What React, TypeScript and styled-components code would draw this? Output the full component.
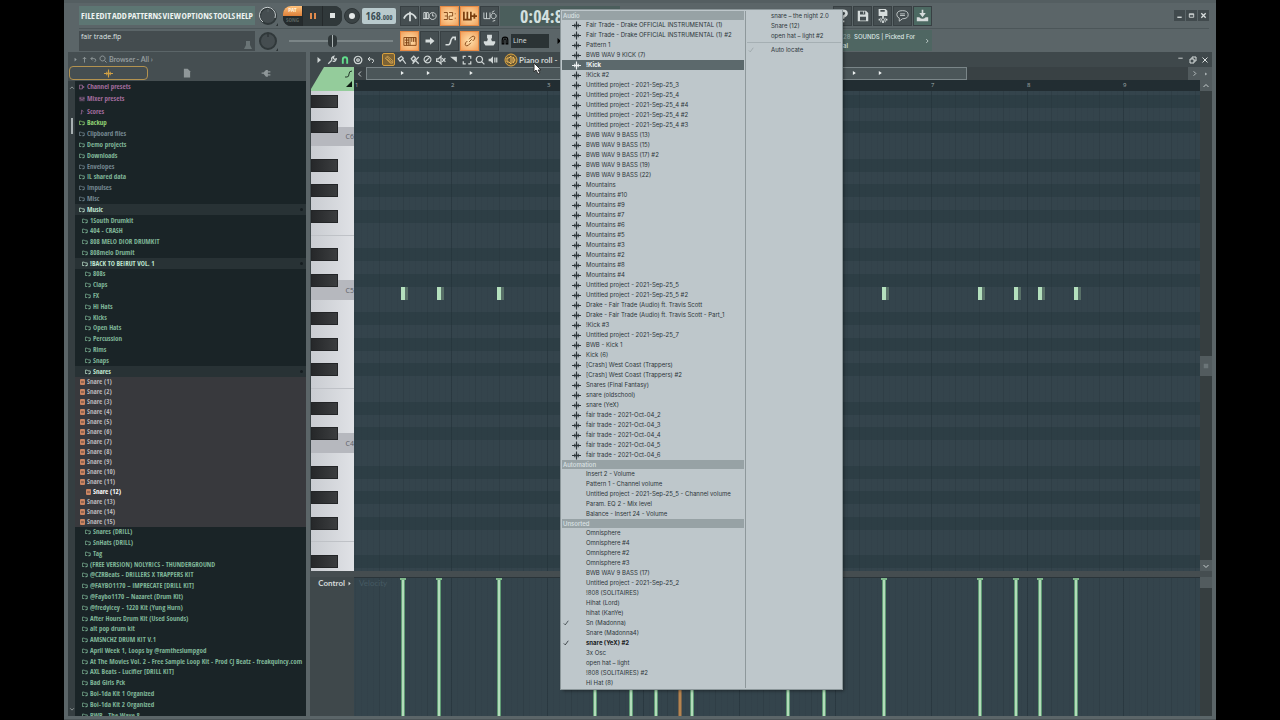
import React from "react";
import styled, { createGlobalStyle, css } from "styled-components";

const condensed = `"Open Sans Condensed", "Liberation Sans Narrow", "Liberation Sans", sans-serif`;
const sans = `"Open Sans", "Noto Sans", sans-serif`;
const labelFace = `Lato, "Open Sans", sans-serif`;
const menuFace = `Inter, "Open Sans", sans-serif`;

const Global = createGlobalStyle`
  * { box-sizing: border-box; }
  html, body { margin: 0; background: #000; }
  body { font-family: ${sans}; overflow: hidden; }
  button, input, select { font: inherit; color: inherit; margin: 0; padding: 0; border: 0; background: none; }
  ul { list-style: none; margin: 0; padding: 0; }
  h2 { margin: 0; font: inherit; }
`;

/* ---------- shell ---------- */

const Page = styled.div`
  padding: 0 5%;
  height: 100vh;
  background: #000;
`;

const Studio = styled.div`
  position: relative;
  height: 100%;
  display: flex;
  flex-direction: column;
  background: #5b6568;
  overflow: hidden;
`;

const Workspace = styled.div`
  flex: 1;
  min-height: 0;
  display: flex;
  gap: 4px;
  padding: 0 4px 3px;
  border-bottom: 1px solid #4a5356;
`;

/* ---------- top bar ---------- */

const TopBar = styled.header`
  display: flex;
  flex-direction: column;
  height: 52px;
  flex: none;
  border-top: 3px solid #545e61;
  padding: 0 7px 0 15px;
`;

const BarRow = styled.div<{ $rule?: boolean }>`
  display: flex;
  align-items: center;
  height: ${(p) => (p.$rule ? 26 : 23)}px;
  border-bottom: ${(p) => (p.$rule ? "1px solid #4c5659" : "0")};
`;

const MenuBar = styled.nav`
  display: flex;
  align-items: center;
  justify-content: space-between;
  width: 176px;
  height: 19px;
  padding: 0 2px;
  background: #5d7673;
  color: #eef3f1;
  font: 400 9px/12px ${condensed};
`;

const FileBox = styled.div`
  display: flex;
  justify-content: space-between;
  width: 176px;
  height: 20px;
  padding: 0 2px;
  background: #444c4f;
  color: #dfe4e4;
  font: 400 7px/12px ${sans};
  & > svg { align-self: flex-end; }
`;

const KnobSlot = styled.div`
  display: flex;
  justify-content: center;
  width: 26px;
  margin-right: 2px;
`;

const Transport = styled.div`
  display: flex;
  align-items: center;
  width: 59px;
  height: 20px;
  border-radius: 8px;
  background: #2b3234;
  overflow: hidden;
`;

const ModeSwitch = styled.div`
  width: 19px;
  height: 20px;
  display: flex;
  flex-direction: column;
`;

const Mode = styled.button<{ $on?: boolean }>`
  height: 10px;
  font: 700 6px/9px ${condensed};
  text-align: center;
  color: ${(p) => (p.$on ? "#fff3dc" : "#59625f")};
  background: ${(p) => (p.$on ? "linear-gradient(#ffc27c, #dd7f38)" : "#252b2d")};
`;

const TransportButton = styled.button`
  flex: 1;
  height: 20px;
  display: grid;
  place-items: center;
  background: #30383a;
  border-left: 1px solid #24292b;
`;

const Record = styled.button`
  display: grid;
  place-items: center;
  width: 16px;
  height: 16px;
  margin: 0 2px;
  border-radius: 50%;
  background: #3a4244;
  border: 1px solid #2d3436;
`;

const Tempo = styled.output`
  width: 34px;
  height: 16px;
  margin-right: 4px;
  border-radius: 2px;
  background: #b9cacd;
  color: #3c4e55;
  text-align: center;
  font: 400 11px/16px ${condensed};
  small { font-size: 7px; }
`;

const Tools = styled.div`
  display: flex;
  gap: 1px;
`;

const Tool = styled.button<{ $on?: boolean }>`
  display: grid;
  place-items: center;
  width: 19px;
  height: 20px;
  color: ${(p) => (p.$on ? "#7b3f10" : "#d6dcdc")};
  border: 1px solid ${(p) => (p.$on ? "#e78a44" : "#384043")};
  background: ${(p) => (p.$on ? "radial-gradient(#ffe3b0, #f2a05a)" : "#454e51")};
`;

const Clock = styled.output`
  width: 120px;
  height: 20px;
  margin-left: 1px;
  padding-left: 20px;
  background: #4b5e5c;
  color: #d3e0df;
  font: 400 18px/20px ${condensed};
`;

const FileTools = styled(Tools)`
  margin-left: 213px;
  & > :last-child { background: #4c6962; }
`;

const WindowButtons = styled.div`
  display: flex;
  gap: 1px;
  margin-left: auto;
`;

const WindowButton = styled.button`
  display: grid;
  place-items: center;
  width: 11px;
  height: 11px;
  background: #414a4d;
  color: #d9dede;
`;

const Position = styled.input`
  appearance: none;
  width: 104px;
  height: 13px;
  margin: 0 7px 0 6px;
  background: linear-gradient(#7b8587, #7b8587) center / 100% 2px no-repeat;
  &::-webkit-slider-thumb {
    appearance: none;
    width: 9px;
    height: 12px;
    border-radius: 4px;
    background: linear-gradient(90deg, #30383a 4px, #aab2b3 4px, #aab2b3 5px, #30383a 5px);
  }
`;

const SnapSelect = styled.select`
  appearance: none;
  width: 38px;
  height: 14px;
  margin: 0 6px 0 1px;
  padding-left: 2px;
  background: #2b3335;
  color: #d9dfdf;
  font: 400 7px/14px ${sans};
`;

const MagnetSlot = styled.span`
  display: flex;
  margin-left: 1px;
`;

const NewsPanel = styled.a`
  display: flex;
  align-items: center;
  justify-content: space-between;
  width: 92px;
  height: 21px;
  margin-left: 277px;
  padding: 0 2px 0 3px;
  background: #4f6662;
  color: #dbe5e3;
  font: 500 6px/9px ${menuFace};
  text-decoration: none;
  white-space: nowrap;
  span { color: #93a5a2; margin-right: 2px; }
`;

/* ---------- browser ---------- */

const Browser = styled.aside`
  width: 238px;
  flex: none;
  display: flex;
  flex-direction: column;
  background: #454e51;
`;

const BrowserTitle = styled.div`
  display: flex;
  align-items: center;
  gap: 2px;
  height: 14px;
  padding-left: 4px;
  color: #939b9d;
  font: 700 7px/14px ${labelFace};
`;

const BrowserTabs = styled.div`
  display: flex;
  height: 15px;
  padding: 0 1px 1px;
`;

const BrowserTab = styled.button<{ $on?: boolean }>`
  flex: 1;
  display: grid;
  place-items: center;
  border-radius: 4px;
  border: 1px solid ${(p) => (p.$on ? "#b3924f" : "transparent")};
  color: ${(p) => (p.$on ? "#d0a044" : "#8f9799")};
`;

const BrowserBody = styled.div`
  flex: 1;
  min-height: 0;
  display: flex;
`;

const BrowserScroll = styled.div`
  width: 7px;
  display: flex;
  flex-direction: column;
  align-items: center;
  justify-content: space-between;
  padding: 4px 0;
  background: #353e41;
  color: #a9b1b2;
`;

const BrowserThumb = styled.div`
  width: 2px;
  height: 16px;
  margin: 27px 0 auto;
  background: #a8b1b2;
`;

const Tree = styled.div`
  flex: 1;
  min-width: 0;
  overflow: hidden;
  background: #1a2427;
`;

const Branch = styled.ul<{ $height: number; $samples?: boolean }>`
  display: grid;
  grid-auto-rows: 1fr;
  height: ${(p) => p.$height}px;
  background: ${(p) => (p.$samples ? "#38393d" : "transparent")};
`;

type Tone = "preset" | "folder" | "dim" | "lime" | "open" | "sample" | "picked";

const tones: Record<Tone, string> = {
  preset: "#a46d9e",
  folder: "#7fb597",
  dim: "#748790",
  lime: "#8fd072",
  open: "#bfe4cf",
  sample: "#b9b6b9",
  picked: "#fafafa",
};

const Entry = styled.li<{ $tone: Tone; $depth: number }>`
  display: flex;
  align-items: center;
  gap: 2px;
  min-width: 0;
  padding-left: ${(p) => 4 + p.$depth * 3}px;
  color: ${(p) => tones[p.$tone]};
  background: ${(p) => (p.$tone === "open" ? "#283235" : "transparent")};
  font: 700 7px/10px ${condensed};
  white-space: nowrap;
  svg { flex: none; }
`;

const Expander = styled.i`
  width: 3px;
  height: 3px;
  margin: 0 3px 0 auto;
  border-radius: 50%;
  background: #151d20;
`;

/* ---------- piano roll ---------- */

const Roll = styled.main`
  flex: 1;
  min-width: 0;
  display: flex;
  flex-direction: column;
  background: #3f484b;
`;

const RollTitle = styled.div`
  display: flex;
  align-items: center;
  height: 15px;
  padding: 0 2px;
  color: #cfd5d5;
`;

const RollTool = styled.button<{ $on?: boolean; $tint?: string }>`
  display: grid;
  place-items: center;
  width: 13px;
  height: 13px;
  border-radius: 2px;
  color: ${(p) => p.$tint || "inherit"};
  border: ${(p) => (p.$on ? "1px solid #d79f3c" : "0")};
  background: ${(p) => (p.$on ? "#7c6335" : "none")};
`;

const ToolGap = styled.span`
  width: 5px;
`;

const RollName = styled.h2`
  margin-left: 1px;
  font: 700 8px/14px ${labelFace};
  white-space: nowrap;
`;

const RollGrid = styled.div`
  flex: 1;
  min-height: 0;
  display: grid;
  grid-template-columns: 44px minmax(0, 1fr) 12px;
  grid-template-rows: 13px 11px minmax(0, 480fr) 6px minmax(0, 139fr);
`;

const Corner = styled.div`
  grid-row: 1 / 3;
  padding-left: 1px;
  svg { display: block; width: 100%; height: 100%; }
`;

const ScrollRow = styled.div`
  grid-column: 2 / 4;
  display: flex;
  align-items: stretch;
  background: #394144;
  color: #c5cccd;
`;

const ScrollArrow = styled.button<{ $lit?: boolean }>`
  display: grid;
  place-items: center;
  width: 12px;
  background: ${(p) => (p.$lit ? "#515a5d" : "none")};
`;

const Overview = styled.div`
  flex: none;
  width: 70%;
  margin-right: auto;
  border: 1px solid #7a8588;
  background: #4b5659;
  svg { display: block; width: 100%; height: 100%; }
`;

const Ruler = styled.div`
  display: flex;
  overflow: hidden;
  background: #222d32;
  color: #a4aeb0;
  font: 400 6px/11px ${sans};
`;

const Bar = styled.span`
  flex: none;
  width: 96px;
  padding-left: 1px;
`;

const SideScroll = styled.div<{ $rows: string }>`
  grid-row: ${(p) => p.$rows};
  grid-column: 3;
  display: flex;
  flex-direction: column;
  justify-content: space-between;
  background: #363e40;
  color: #c5cccd;
`;

const SideBlock = styled.button<{ $tall?: boolean }>`
  display: grid;
  place-items: center;
  width: 12px;
  height: ${(p) => (p.$tall ? 20 : 11)}px;
  color: ${(p) => (p.$tall ? "#6b7578" : "inherit")};
  background: #525b5e;
`;

/* the thumb sits a little below the middle of its track */
const ThumbSpace = styled.span<{ $grow: number }>`
  flex: ${(p) => p.$grow};
`;

const laneRows = css`
  display: grid;
  grid-template-rows: 4px repeat(37, minmax(0, 1fr)) 3px;
`;

const keyWhite = "linear-gradient(90deg, #c9ccd1, #e0e2e6)";

const Keyboard = styled.div`
  ${laneRows}
  margin-left: 1px;
  background: ${keyWhite};
`;

const Key = styled.div<{ $black: boolean; $c: boolean; $cSharp: boolean; $line: boolean }>`
  display: flex;
  justify-content: ${(p) => (p.$black ? "flex-start" : "flex-end")};
  border-bottom: ${(p) => (p.$line ? "1px solid #bfc2c7" : "0")};
  background: ${(p) =>
    p.$c ? "#b6b8be" : p.$cSharp ? "linear-gradient(transparent 50%, #b6b8be 50%)" : "none"};
  color: #5e6167;
  font: 400 7px/8px ${sans};
`;

const BlackKey = styled.i`
  width: 27px;
  height: 100%;
  background: linear-gradient(90deg, #26282a, #3b3d3f);
  border: 1px solid #232527;
`;

const gridLines = css`
  position: relative;
  background-image:
    repeating-linear-gradient(90deg, transparent 0 95px, #22303866 95px 96px),
    repeating-linear-gradient(90deg, transparent 0 23px, #26343c44 23px 24px),
    repeating-linear-gradient(90deg, transparent 0 5px, #2a394133 5px 6px);
  background-position: 2px 0;
`;

const Lanes = styled.div`
  ${laneRows}
  ${gridLines}
  background-color: #34444c;
  overflow: hidden;
`;

const Lane = styled.div<{ $black: boolean }>`
  position: relative;
  background: ${(p) => (p.$black ? "#22323a55" : "transparent")};
`;

const Note = styled.i`
  position: absolute;
  top: 0;
  width: 7px;
  height: 100%;
  margin-left: -1px;
  background: linear-gradient(90deg, #b4e0bd 4px, #587068 4px);
`;

const Splitter = styled.div`
  grid-column: 1 / 4;
  background: #454d50;
`;

const ControlLabel = styled.div`
  display: flex;
  justify-content: flex-end;
  align-items: center;
  gap: 2px;
  height: 12px;
  padding-right: 2px;
  color: #d3d9d9;
  font: 700 8px/12px ${labelFace};
`;

const Velocities = styled.div`
  ${gridLines}
  background-color: #34444c;
  border-top: 1px solid #2a3439;
  overflow: hidden;
  color: #465a63;
  font: 400 8px/10px ${labelFace};
  padding-left: 5px;
`;

const Stem = styled.i<{ $ghost?: boolean }>`
  position: absolute;
  top: 0;
  bottom: 0;
  width: 2px;
  background: ${(p) => (p.$ghost ? "#b58450" : "#b2dcb9")};
  box-shadow: 0 0 0 1px ${(p) => (p.$ghost ? "#7b6248" : "#5f9a74")};
  &::before {
    content: "";
    position: absolute;
    top: 0;
    left: -2px;
    width: 6px;
    height: 2px;
    background: ${(p) => (p.$ghost ? "#a87c4e" : "#7fb98c")};
  }
`;

/* ---------- channel menu ---------- */

const ChannelMenu = styled.div`
  position: absolute;
  top: 10px;
  left: 497px;
  display: flex;
  padding: 1px 0;
  background: #bec7cb;
  box-shadow: 0 0 0 1px #8b9699, 2px 2px 3px #0006;
`;

const MenuColumn = styled.div<{ $side?: boolean }>`
  width: ${(p) => (p.$side ? 97 : 184)}px;
  padding: 0 1px;
  border-left: ${(p) => (p.$side ? "1px solid #8e989b" : "0")};
`;

const MenuHeading = styled.h2`
  height: 9px;
  padding-left: 1px;
  background: #97a2a5;
  color: #dce3e5;
  font: 500 6px/9px ${menuFace};
`;

const MenuItem = styled.button<{ $hot?: boolean; $strong?: boolean }>`
  display: flex;
  align-items: center;
  width: 100%;
  height: 10px;
  color: ${(p) => (p.$hot ? "#f1f4f4" : p.$strong ? "#1b2225" : "#2c3539")};
  background: ${(p) => (p.$hot ? "#5c696c" : "none")};
  font: ${(p) => (p.$hot || p.$strong ? 700 : 400)} 6px/10px ${menuFace};
  text-align: left;
  white-space: nowrap;
`;

const MenuMark = styled.span<{ $kind: "check" | "wave"; $faint?: boolean }>`
  flex: none;
  display: flex;
  width: ${(p) => (p.$kind === "check" ? 9 : 15)}px;
  padding-left: 1px;
  opacity: ${(p) => (p.$faint ? 0.25 : 1)};
`;

const MenuRule = styled.hr`
  height: 1px;
  margin: 1px 0 2px;
  border: 0;
  background: #a5afb3;
`;

const Pointer = styled.svg`
  position: absolute;
  left: 469px;
  top: 62px;
`;

/* ---------- drawings ---------- */

type IconProps = { size?: number; w?: number; box?: string; fill?: boolean; sw?: number; d: string };

function Icon({ size = 12, w, box = "0 0 16 16", fill, sw = 2, d }: IconProps) {
  return (
    <svg
      width={w ?? size}
      height={size}
      viewBox={box}
      fill={fill ? "currentColor" : "none"}
      stroke={fill ? "none" : "currentColor"}
      strokeWidth={sw}
      aria-hidden="true"
    >
      <path d={d} />
    </svg>
  );
}

const art = {
  metronome: "M8 14V3M8 5Q3 6 1 11M8 5q5 1 7 6",
  keysClock: "M1 4h2v7H1zM4 4h2v7H4zM0 11h7M11 4a4 4 0 1 0 .1 0M11 5v3h2",
  keysPlus: "M1 3v9h8V3M5 3v9M10 8h6M13 5v6",
  keysLoop: "M1 4v7h7V4M4 4v7M12 5a3 3 0 1 0 .1 0M10 4l3-2M14 13l-3 1",
  typing: "M1 4h14v9H1zM8 4v9M10 4v5M12 4v5M14 4v5M2 7h5M2 10h5M4 4v9M6 4v9",
  arrow: "M2 6h6V3l6 5-6 5v-3H2z",
  slide: "M2 13h4q2 0 3-5t5-5M11 3h4v4",
  link: "M7 9l3-3M5 8l-2 2q-1 2 0 3t3 0l3-3M11 8l2-2q1-2 0-3t-3 0L7 6",
  stamp: "M5 1h6v4l-1 1 1 3h4v2l-2 3H3l-2-3V9h4l1-3-1-1z",
  magnet: "M3 14V7q0-5 5-5t5 5v7h-3V7q0-2-2-2T6 7v7z",
  help: "M4 5q0-3 4-3t4 3q0 2-4 4v2M8 13v2",
  save: "M1 1h11l3 3v11H1zM4 2v4h7V2H9v3H8V2zM4 9v5h8V9z",
  saveNew: "M3 0h8l2 2v6H3zM5 1v2h5V1zM7 8h2v8H7zM3 11h10v2H3zM5 10h1v5H5zM10 10h1v5h-1z",
  speech: "M8 2q7 0 7 5t-7 5l-4 3 0-4q-3-1-3-4Q1 2 8 2zM5 6h6M5 8h6",
  download: "M7 1h2v4h3l-4 5-4-5h3zM1 10h3q4 4 8 0h3v5H1z",
  min: "M3 12h10",
  max: "M3 4h10v8H3zM3 6h10",
  close: "M3 3l10 10M13 3L3 13",
  restore: "M2 6h8v8H2zM6 6V2h8v8h-4",
  tri: "M5 2l7 6-7 6z",
  up: "M8 15V3M4 7l4-4 4 4",
  undo: "M6 2L2 6l4 4M2 6h7q5 0 4 5l-3 3",
  search: "M7 2a5 5 0 1 0 .1 0M11 11l4 4",
  wave: "M0 8h16M5 5v6M8 1v14M11 5v6",
  page: "M3 1h6l4 4v10H3z",
  plug: "M1 7h3l4-4h3v2h4v2h-4v3h4v2h-4v2H8L4 9H1z",
  wrench: "M2 14l6-6M8 8q-2-4 3-6l-1 3 2 2 3-1q-1 5-6 4",
  target: "M8 2a6 6 0 1 0 .1 0M8 6a2 2 0 1 0 .1 0",
  pencil: "M2 5l4-3 8 7v4h-4zM5 3l8 9M4 6l7 6",
  brush: "M2 6l5-4 3 3-5 5zM9 7l5 7",
  scrub: "M2 6l4-4 3 3-4 5zM8 8l6 6M14 3L4 14",
  ban: "M8 2a6 6 0 1 0 .1 0M12 4l-8 8",
  mute: "M1 6h3l4-4v12l-4-4H1zM10 5l5 6M15 5l-5 6",
  slice: "M2 3h12v10z",
  select: "M2 6V2h4M10 2h4v4M14 10v4h-4M6 14H2v-4",
  speaker: "M1 6h3l4-4v12l-4-4H1zM10 4h2v8h-2zM13 4h2v8h-2z",
  chevL: "M10 3L5 8l5 5",
  chevR: "M6 3l5 5-5 5",
  chevU: "M3 10l5-5 5 5",
  chevD: "M3 6l5 5 5-5",
  check: "M2 9l4 4L14 2",
  folder: "M1 3h5l2 2h6v7H9M1 3v9h5M10 14l4-3",
  preset: "M1 3h8v10H1zM9 5l5 3-5 3",
  mixer: "M3 2v12M8 2v12M13 2v12M1 6h4M6 10h4M11 6h4",
  score: "M4 13h3V3l5 4",
};

function Knob({ bright }: { bright?: boolean }) {
  return (
    <svg width="20" height="20" viewBox="0 0 20 20" aria-hidden="true">
      <circle cx="10" cy="10" r="8" fill="#454d50" stroke="#30383a" strokeWidth="2" />
      {bright && <path d="M5 16A8 8 0 1 1 17 12" fill="none" stroke="#c9d0d1" strokeWidth="1" />}
      <path d="M10 3v3" stroke={bright ? "#586264" : "#242b2d"} strokeWidth="1" />
      <path d="M18 20l2-3v3z" fill="#2d3436" />
    </svg>
  );
}

function SampleIcon() {
  return (
    <svg width="6" height="6" viewBox="0 0 6 6" aria-hidden="true">
      <rect x="1" width="5" height="6" rx="1" fill="#cc8562" />
      <path d="M2 3h3" stroke="#5f4a42" strokeWidth="1" />
    </svg>
  );
}

/* ---------- data ---------- */

type Row = [string, Tone, number];

const presets = ["Channel presets", "Mixer presets", "Scores"];
const presetArt = [art.preset, art.mixer, art.score];

const folders: Row[] = [
  ["Backup", "lime", 0],
  ["Clipboard files", "dim", 0],
  ["Demo projects", "folder", 0],
  ["Downloads", "folder", 0],
  ["Envelopes", "dim", 0],
  ["IL shared data", "folder", 0],
  ["Impulses", "dim", 0],
  ["Misc", "dim", 0],
  ["Music", "open", 0],
  ["1South Drumkit", "folder", 1],
  ["404 - CRASH", "folder", 1],
  ["808 MELO DIOR DRUMKIT", "folder", 1],
  ["808melo Drumit", "folder", 1],
  ["!BACK TO BEIRUT VOL. 1", "open", 1],
  ["808s", "folder", 2],
  ["Claps", "folder", 2],
  ["FX", "folder", 2],
  ["Hi Hats", "folder", 2],
  ["Kicks", "folder", 2],
  ["Open Hats", "folder", 2],
  ["Percussion", "folder", 2],
  ["Rims", "folder", 2],
  ["Snaps", "folder", 2],
  ["Snares", "open", 2],
];

const kits: Row[] = [
  ["Snares (DRILL)", "folder", 2],
  ["SnHats (DRILL)", "folder", 2],
  ["Tag", "folder", 2],
  ["(FREE VERSION) NOLYRICS - THUNDERGROUND", "folder", 1],
  ["@CZRBeats - DRILLERS X TRAPPERS KIT", "folder", 1],
  ["@FAYBO1170 – IMPRECATE [DRILL KIT]", "folder", 1],
  ["@Faybo1170 – Nazaret (Drum Kit)", "folder", 1],
  ["@fredyicey - 1220 Kit (Yung Hurn)", "folder", 1],
  ["After Hours Drum Kit (Used Sounds)", "folder", 1],
  ["alt pop drum kit", "folder", 1],
  ["AMSNCHZ DRUM KIT V.1", "folder", 1],
  ["April Week 1, Loops by @ramtheslumpgod", "folder", 1],
  ["At The Movies Vol. 2 - Free Sample Loop Kit - Prod CJ Beatz - freakquincy.com", "folder", 1],
  ["AXL Beats - Lucifier [DRILL KIT]", "folder", 1],
  ["Bad Girls Pck", "folder", 1],
  ["Boi-1da Kit 1 Organized", "folder", 1],
  ["Boi-1da Kit 2 Organized", "folder", 1],
  ["BWB - The Wave 8", "folder", 1],
];

const audio = [
  "Fair Trade - Drake OFFICIAL INSTRUMENTAL (1)",
  "Fair Trade - Drake OFFICIAL INSTRUMENTAL (1) #2",
  "Pattern 1",
  "BWB WAV 9 KICK (7)",
  "!Kick",
  "!Kick #2",
  "Untitled project - 2021-Sep-25_3",
  "Untitled project - 2021-Sep-25_4",
  "Untitled project - 2021-Sep-25_4 #4",
  "Untitled project - 2021-Sep-25_4 #2",
  "Untitled project - 2021-Sep-25_4 #3",
  "BWB WAV 9 BASS (13)",
  "BWB WAV 9 BASS (15)",
  "BWB WAV 9 BASS (17) #2",
  "BWB WAV 9 BASS (19)",
  "BWB WAV 9 BASS (22)",
  "Mountains",
  "Mountains #10",
  "Mountains #9",
  "Mountains #7",
  "Mountains #6",
  "Mountains #5",
  "Mountains #3",
  "Mountains #2",
  "Mountains #8",
  "Mountains #4",
  "Untitled project - 2021-Sep-25_5",
  "Untitled project - 2021-Sep-25_5 #2",
  "Drake - Fair Trade (Audio) ft. Travis Scott",
  "Drake - Fair Trade (Audio) ft. Travis Scott - Part_1",
  "!Kick #3",
  "Untitled project - 2021-Sep-25_7",
  "BWB - Kick 1",
  "Kick (6)",
  "[Crash] West Coast (Trappers)",
  "[Crash] West Coast (Trappers) #2",
  "Snares (Final Fantasy)",
  "snare (oldschool)",
  "snare (YeX)",
  "fair trade - 2021-Oct-04_2",
  "fair trade - 2021-Oct-04_3",
  "fair trade - 2021-Oct-04_4",
  "fair trade - 2021-Oct-04_5",
  "fair trade - 2021-Oct-04_6",
];

const automation = [
  "Insert 2 - Volume",
  "Pattern 1 - Channel volume",
  "Untitled project - 2021-Sep-25_5 - Channel volume",
  "Param. EQ 2 - Mix level",
  "Balance - Insert 24 - Volume",
];

const unsorted = [
  "Omnisphere",
  "Omnisphere #4",
  "Omnisphere #2",
  "Omnisphere #3",
  "BWB WAV 9 BASS (17)",
  "Untitled project - 2021-Sep-25_2",
  "!808 (SOLITAIRES)",
  "Hihat (Lord)",
  "hihat (KanYe)",
  "Sn (Madonna)",
  "Snare (Madonna4)",
  "snare (YeX) #2",
  "3x Osc",
  "open hat – light",
  "!808 (SOLITAIRES) #2",
  "Hi Hat (8)",
];

const recent = ["snare – the night 2.0", "Snare (12)", "open hat – light #2"];
const checked = ["Sn (Madonna)", "snare (YeX) #2", "Auto locate"];

const barLabels = ["1", "2", "3", "", "", "", "7", "8", "9"];

const hits = [8, 14, 24, 40, 46, 50, 54, 56, 72, 78, 88, 104, 110, 114, 120];
const ghostHit = 54;
const stepLeft = (step: number) => Math.round((step * 601) / 100);

/* semitone of every lane, from D#6 down to D#3 */
const lanes = Array.from({ length: 37 }, (_, i) => 87 - i);
const isBlack = (n: number) => [1, 3, 6, 8, 10].includes(n % 12);

/* ---------- parts ---------- */

function TopControls() {
  return (
    <TopBar>
      <BarRow $rule>
        <MenuBar>
          {["FILE", "EDIT", "ADD", "PATTERNS", "VIEW", "OPTIONS", "TOOLS", "HELP"].map((m) => (
            <button key={m}>{m}</button>
          ))}
        </MenuBar>
        <KnobSlot><Knob bright /></KnobSlot>
        <Transport>
          <ModeSwitch>
            <Mode $on>PAT</Mode>
            <Mode>SONG</Mode>
          </ModeSwitch>
          <TransportButton aria-label="Pause">
            <svg width="6" height="6"><path d="M0 0h2v6H0zM4 0h2v6H4z" fill="#e08a4c" /></svg>
          </TransportButton>
          <TransportButton aria-label="Stop">
            <svg width="5" height="5"><path d="M0 0h5v5H0z" fill="#dfe3e3" /></svg>
          </TransportButton>
        </Transport>
        <Record aria-label="Record">
          <svg width="6" height="6"><circle cx="3" cy="3" r="3" fill="#e6eaea" /></svg>
        </Record>
        <Tempo>168<small>.000</small></Tempo>
        <Tools>
          <Tool aria-label="Metronome"><Icon size={14} d={art.metronome} /></Tool>
          <Tool aria-label="Wait for input"><Icon size={14} sw={1} d={art.keysClock} /></Tool>
          <Tool $on aria-label="Countdown">
            <Icon size={14} sw={1} d="M1 4h4v4H2M5 8v4H1M7 4h4v4H7v4h4M14 5v1M14 10v1" />
          </Tool>
          <Tool $on aria-label="Overdub"><Icon size={14} d={art.keysPlus} /></Tool>
          <Tool aria-label="Loop recording"><Icon size={14} sw={1} d={art.keysLoop} /></Tool>
        </Tools>
        <Clock>0:04:8</Clock>
        <FileTools>
          <Tool aria-label="Help"><Icon size={14} sw={3} d={art.help} /></Tool>
          <Tool aria-label="Save">
            <svg width="12" height="12" viewBox="0 0 16 16" fill="currentColor" fillRule="evenodd" aria-hidden="true">
              <path d={art.save} />
            </svg>
          </Tool>
          <Tool aria-label="Save new version">
            <svg width="14" height="14" viewBox="0 0 16 16" fill="currentColor" fillRule="evenodd" aria-hidden="true">
              <path d={art.saveNew} />
            </svg>
          </Tool>
          <Tool aria-label="Comments"><Icon size={13} sw={1} d={art.speech} /></Tool>
          <Tool aria-label="Download"><Icon size={13} fill d={art.download} /></Tool>
        </FileTools>
        <WindowButtons>
          <WindowButton aria-label="Minimise"><Icon size={7} sw={3} d={art.min} /></WindowButton>
          <WindowButton aria-label="Maximise"><Icon size={7} d={art.max} /></WindowButton>
          <WindowButton aria-label="Close"><Icon size={7} sw={3} d={art.close} /></WindowButton>
        </WindowButtons>
      </BarRow>
      <BarRow>
        <FileBox>
          fair trade.flp
          <svg width="10" height="12" viewBox="0 0 10 12" aria-hidden="true">
            <path d="M3 2h4v4l2 4H1l2-4z" fill="#6a7476" />
          </svg>
        </FileBox>
        <KnobSlot><Knob /></KnobSlot>
        <Position type="range" min="0" max="100" defaultValue="41" aria-label="Song position" />
        <Tools>
          <Tool $on aria-label="Typing keyboard"><Icon size={14} sw={1} d={art.typing} /></Tool>
          <Tool aria-label="Step edit"><Icon size={12} fill d={art.arrow} /></Tool>
          <Tool aria-label="Slide"><Icon size={12} d={art.slide} /></Tool>
          <Tool $on aria-label="Link"><Icon size={14} sw={1} d={art.link} /></Tool>
          <Tool aria-label="Stamp"><Icon size={13} fill d={art.stamp} /></Tool>
        </Tools>
        <MagnetSlot><Icon size={9} w={10} sw={2} d={art.magnet} /></MagnetSlot>
        <SnapSelect aria-label="Snap"><option>Line</option></SnapSelect>
        <Icon size={8} fill d={art.tri} />
        <NewsPanel href="#news">
          <div><span>28</span> SOUNDS | Picked For<br />al</div>
          <Icon size={6} d={art.chevR} />
        </NewsPanel>
      </BarRow>
    </TopBar>
  );
}

function Folders({ rows }: { rows: Row[] }) {
  return (
    <>
      {rows.map(([name, tone, depth]) => (
        <Entry key={name} $tone={tone} $depth={depth}>
          <Icon size={6} d={art.folder} />
          {name}
          {tone === "open" && <Expander />}
        </Entry>
      ))}
    </>
  );
}

function BrowserPanel() {
  return (
    <Browser>
      <BrowserTitle>
        <Icon size={5} w={7} fill d={art.tri} />
        <Icon size={7} w={7} d={art.up} />
        <Icon size={7} d={art.undo} />
        <Icon size={8} d={art.search} />
        Browser - All ›
      </BrowserTitle>
      <BrowserTabs>
        <BrowserTab $on aria-label="Sounds"><Icon size={9} sw={2} d={art.wave} /></BrowserTab>
        <BrowserTab aria-label="Files"><Icon size={10} fill d={art.page} /></BrowserTab>
        <BrowserTab aria-label="Plugins"><Icon size={10} fill d={art.plug} /></BrowserTab>
      </BrowserTabs>
      <BrowserBody>
        <BrowserScroll>
          <Icon size={6} d={art.chevU} />
          <BrowserThumb />
          <Icon size={6} d={art.chevD} />
        </BrowserScroll>
        <Tree>
          <Branch $height={37}>
            {presets.map((name, i) => (
              <Entry key={name} $tone="preset" $depth={0}>
                <Icon size={6} d={presetArt[i]} />
                {name}
              </Entry>
            ))}
          </Branch>
          <Branch $height={259}><Folders rows={folders} /></Branch>
          <Branch $height={150} $samples>
            {Array.from({ length: 15 }, (_, i) => i + 1).map((n) => (
              <Entry key={n} $tone={n === 12 ? "picked" : "sample"} $depth={n === 12 ? 2 : 0}>
                <SampleIcon />
                Snare ({n})
              </Entry>
            ))}
          </Branch>
          <Branch $height={194}><Folders rows={kits} /></Branch>
        </Tree>
      </BrowserBody>
    </Browser>
  );
}

const PlainButtons = styled(WindowButtons)`
  button { background: none; }
`;

function PianoRoll() {
  return (
    <Roll>
      <RollTitle>
        <RollTool aria-label="Menu"><Icon size={8} fill d={art.tri} /></RollTool>
        <RollTool aria-label="Tools"><Icon size={10} d={art.wrench} /></RollTool>
        <RollTool $tint="#62dd8c" aria-label="Snap"><Icon size={10} fill d={art.magnet} /></RollTool>
        <RollTool aria-label="Target"><Icon size={10} sw={2} d={art.target} /></RollTool>
        <RollTool aria-label="Undo"><Icon size={8} d={art.undo} /></RollTool>
        <ToolGap />
        <RollTool $on $tint="#f0b95a" aria-label="Draw"><Icon size={10} sw={1} d={art.pencil} /></RollTool>
        <RollTool aria-label="Paint"><Icon size={10} d={art.brush} /></RollTool>
        <RollTool aria-label="Paint drums"><Icon size={10} d={art.scrub} /></RollTool>
        <RollTool aria-label="Delete"><Icon size={9} d={art.ban} /></RollTool>
        <RollTool aria-label="Mute"><Icon size={10} d={art.mute} /></RollTool>
        <RollTool aria-label="Slice"><Icon size={9} fill d={art.slice} /></RollTool>
        <RollTool aria-label="Select"><Icon size={10} d={art.select} /></RollTool>
        <RollTool aria-label="Zoom"><Icon size={10} d={art.search} /></RollTool>
        <RollTool aria-label="Play"><Icon size={10} fill d={art.speaker} /></RollTool>
        <ToolGap />
        <svg width="14" height="14" viewBox="0 0 14 14" aria-hidden="true">
          <circle cx="7" cy="7" r="6" fill="#6b5a34" stroke="#e3a83f" />
          <path d="M3 5h2l2-2v8L5 9H3zM9 4l2 3-2 3z" fill="none" stroke="#f0b95a" />
        </svg>
        <RollName>Piano roll -</RollName>
        <PlainButtons>
          <WindowButton aria-label="Minimise"><Icon size={7} d="M3 5h10" /></WindowButton>
          <WindowButton aria-label="Restore"><Icon size={8} d={art.restore} /></WindowButton>
          <WindowButton aria-label="Close"><Icon size={8} d={art.close} /></WindowButton>
        </PlainButtons>
      </RollTitle>
      <RollGrid>
        <Corner>
          <svg viewBox="0 0 43 24" preserveAspectRatio="none" aria-hidden="true">
            <path d="M13 0h30v24H0v-2z" fill="#94cc9b" />
            <path d="M34 10h2q2 0 2-3t3-3" stroke="#24382b" strokeWidth="1" fill="none" />
            <path d="M41 14v6h-6z" fill="#0e1a12" />
          </svg>
        </Corner>
        <ScrollRow>
          <ScrollArrow aria-label="Scroll left"><Icon size={8} d={art.chevL} /></ScrollArrow>
          <Overview>
            <svg viewBox="0 0 600 11" preserveAspectRatio="xMinYMid meet" aria-hidden="true">
              {[34, 60, 103, 487, 513].map((x) => (
                <path key={x} d={`M${x} 3l3 2-3 2z`} fill="#eef1f1" />
              ))}
            </svg>
          </Overview>
          <ScrollArrow $lit aria-label="Scroll right"><Icon size={7} d={art.chevR} /></ScrollArrow>
          <ScrollArrow $lit aria-label="Zoom"><Icon size={4} fill d={art.tri} /></ScrollArrow>
        </ScrollRow>
        <Ruler>
          {barLabels.map((label, i) => <Bar key={i}>{label}</Bar>)}
        </Ruler>
        <SideScroll $rows="2 / 4">
          <SideBlock aria-label="Scroll up"><Icon size={8} d={art.chevU} /></SideBlock>
          <ThumbSpace $grow={59} />
          <SideBlock $tall aria-label="Vertical position"><Icon size={6} fill d="M2 2h12v12H2z" /></SideBlock>
          <ThumbSpace $grow={41} />
          <SideBlock aria-label="Scroll down"><Icon size={8} d={art.chevD} /></SideBlock>
        </SideScroll>
        <Keyboard>
          <span />
          {lanes.map((n) => (
            <Key key={n} $black={isBlack(n)} $c={n % 12 === 0} $cSharp={n % 12 === 1} $line={n % 12 === 5}>
              {isBlack(n) && <BlackKey />}
              {n % 12 === 0 && `C${n / 12 - 1}`}
            </Key>
          ))}
        </Keyboard>
        <Lanes>
          <span />
          {lanes.map((n) => (
            <Lane key={n} $black={isBlack(n)}>
              {n === 72 && hits.map((s) => <Note key={s} style={{ left: stepLeft(s) }} />)}
            </Lane>
          ))}
        </Lanes>
        <Splitter />
        <ControlLabel>Control <Icon size={5} fill d={art.tri} /></ControlLabel>
        <Velocities>
          Velocity
          {hits.map((s) => <Stem key={s} $ghost={s === ghostHit} style={{ left: stepLeft(s) }} />)}
        </Velocities>
        <SideScroll $rows="5">
          <SideBlock aria-label="Control zoom" />
        </SideScroll>
      </RollGrid>
    </Roll>
  );
}

function Items({ names, wave }: { names: string[]; wave?: boolean }) {
  return (
    <>
      {names.map((name) => (
        <MenuItem key={name} role="menuitem" $hot={name === "!Kick"} $strong={name === "snare (YeX) #2"}>
          <MenuMark $kind="check" $faint={name === "Auto locate"}>
            {checked.includes(name) && <Icon size={6} d={art.check} />}
          </MenuMark>
          <MenuMark $kind="wave">{wave && <Icon size={9} sw={2} d={art.wave} />}</MenuMark>
          {name}
        </MenuItem>
      ))}
    </>
  );
}

export default function App() {
  return (
    <Page>
      <Global />
      <Studio>
        <TopControls />
        <Workspace>
          <BrowserPanel />
          <PianoRoll />
        </Workspace>
        <Pointer width="9" height="13" viewBox="0 0 9 13" aria-hidden="true">
          <path d="M1 1v9l2-2 2 4 2-1-2-3h3z" fill="#fff" stroke="#333" strokeWidth="1" />
        </Pointer>
        <ChannelMenu role="menu">
          <MenuColumn>
            <MenuHeading>Audio</MenuHeading>
            <Items names={audio} wave />
            <MenuHeading>Automation</MenuHeading>
            <Items names={automation} />
            <MenuHeading>Unsorted</MenuHeading>
            <Items names={unsorted} />
          </MenuColumn>
          <MenuColumn $side>
            <Items names={recent} />
            <MenuRule />
            <Items names={["Auto locate"]} />
          </MenuColumn>
        </ChannelMenu>
      </Studio>
    </Page>
  );
}
